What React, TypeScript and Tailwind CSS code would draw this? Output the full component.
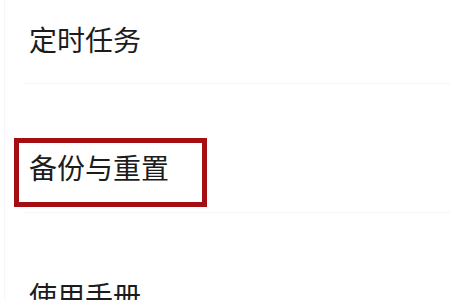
import React from "react";

const font = { fontFamily: '"Noto Sans CJK SC", "Noto Sans", sans-serif' };

export default function App() {
  return (
    <div className="w-[450px] h-[300px] overflow-hidden bg-white relative" style={font}>
      <div className="ml-[4px] h-full border-l border-[#f6f6f6]">
        <div className="ml-[20px] border-b border-[#f4f4f4] pt-[25px] h-[84px]">
          <div className="pl-[4px] text-[28px] leading-[28px] text-[#1c1c1c]">定时任务</div>
        </div>
        <div className="ml-[20px] border-b border-[#f4f4f4] pt-[69px] h-[129px]">
          <div className="pl-[4px] text-[28px] leading-[28px] text-[#1c1c1c]">备份与重置</div>
        </div>
        <div className="ml-[20px] pt-[68px]">
          <div className="pl-[4px] text-[28px] leading-[28px] text-[#1c1c1c]">使用手册</div>
        </div>
      </div>
      <div className="absolute left-[14px] top-[138px] w-[193px] h-[69px] border-[5px] border-[#a30f12]" />
    </div>
  );
}
